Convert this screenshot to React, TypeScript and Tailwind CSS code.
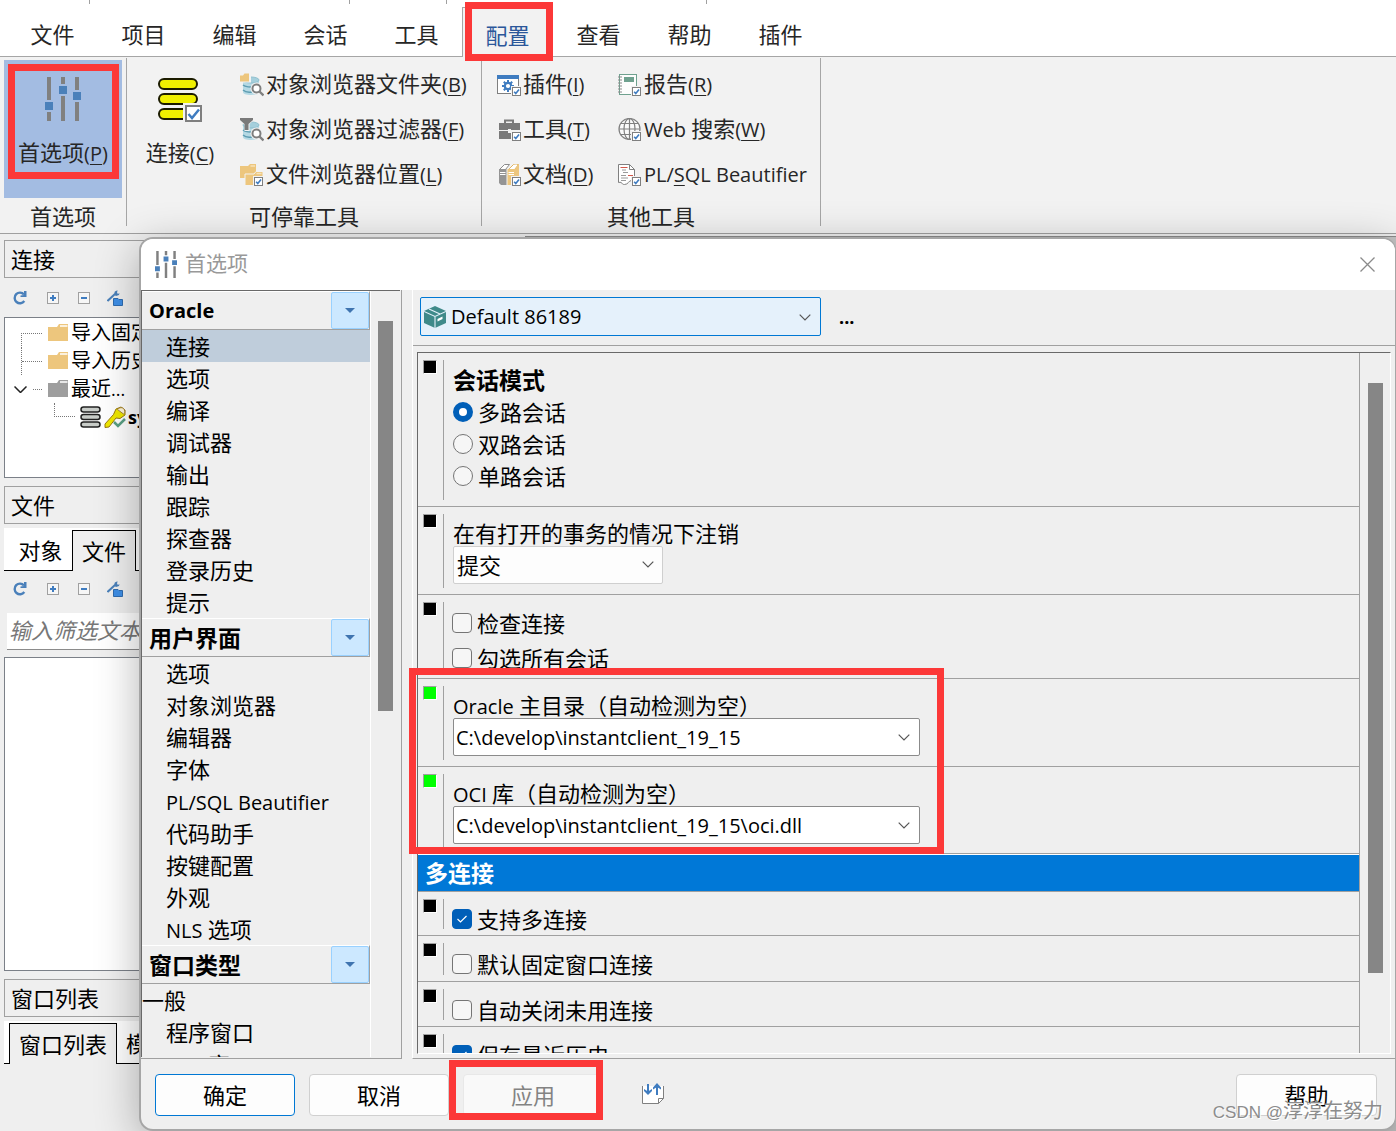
import React from "react";

/* ---------- small drawing helpers ---------- */

function TickBadge({ x, y, s = 9 }: { x: number; y: number; s?: number }) {
  return (
    <g transform={`translate(${x} ${y})`}>
      <rect x="-1" y="-1" width={s + 2} height={s + 2} fill="#f2f2f2" />
      <rect x="0.5" y="0.5" width={s - 1} height={s - 1} fill="#fff" stroke="#7f7f7f" />
      <path
        d={`M${s * 0.24} ${s * 0.52}L${s * 0.42} ${s * 0.72}L${s * 0.78} ${s * 0.28}`}
        fill="none"
        stroke="#3f7cc0"
        strokeWidth={s * 0.18}
      />
    </g>
  );
}

/* Latin runs are set a little smaller than the Chinese text around them. */
function Mixed({ text }: { text: string }) {
  return (
    <>
      {text.split(/([\x20-\x7e]+)/).map((run, i) =>
        i % 2 === 1 ? (
          <span key={i} className="text-[20px]">
            {run}
          </span>
        ) : (
          run
        ),
      )}
    </>
  );
}

function SlidersIcon({ className }: { className: string }) {
  return (
    <svg className={className} viewBox="0 0 36 44" aria-hidden="true">
      <g fill="#808080">
        <path d="M2 0h4v23H2zM2 35h4v9H2zM16 0h4v7h-4zM16 19h4v25h-4zM30 0h4v13h-4zM30 25h4v19h-4z" />
      </g>
      <path fill="#4a80ba" d="M0 25h8v8H0zM14 9h8v8h-8zM28 15h8v8h-8z" />
    </svg>
  );
}

function ConnectionIcon() {
  return (
    <svg className="h-[46px] w-[46px]" viewBox="0 0 46 46" aria-hidden="true">
      <g fill="#f0f000" stroke="#1c1c00" strokeWidth="2">
        <rect x="2" y="2" width="38" height="10" rx="5" />
        <rect x="2" y="17" width="38" height="10" rx="5" />
        <rect x="2" y="32" width="38" height="10" rx="5" />
      </g>
      <rect x="26" y="26" width="20" height="20" fill="#f2f2f2" />
      <rect x="29" y="29" width="15" height="15" fill="#fff" stroke="#7f7f7f" strokeWidth="2" />
      <path d="M31.500 37l3.500 4 7-8.500" fill="none" stroke="#3f7cc0" strokeWidth="2.500" />
    </svg>
  );
}

function Database({ children }: { children: React.ReactNode }) {
  return (
    <svg className="h-6 w-6" viewBox="0 0 24 24" aria-hidden="true">
      <path d="M3 7v12c0 2 3 3 8 3s8-1 8-3V7z" fill="#b5d9e4" />
      <path d="M3 12c2 2 8 2.500 11 1.500M3 17c2 2 6 2.500 9 2" fill="none" stroke="#5e9db2" strokeWidth="1.400" />
      <ellipse cx="11" cy="7" rx="8" ry="3" fill="#a5cfdc" stroke="#8fc0cf" />
      <circle cx="16.500" cy="15.500" r="6" fill="#f2f2f2" />
      <circle cx="16.500" cy="15.500" r="4" fill="#fff" stroke="#7f7f7f" strokeWidth="2" />
      <path d="M19.500 18.500l4 4" stroke="#7f7f7f" strokeWidth="2.400" />
      {children}
    </svg>
  );
}

const FolderDbIcon = () => (
  <Database>
    <path d="M-1 0h12v9.500H-1z" fill="#f2f2f2" />
    <path d="M0 2.500h3L4.500 0.500H9v8H0z" fill="#edc67d" />
  </Database>
);

const FilterDbIcon = () => (
  <Database>
    <path d="M-1 0h15v2L9.500 6v7h-5V7L-1 2z" fill="#f2f2f2" />
    <path d="M0 0h13v2L8.500 6v6h-4V6L0 2z" fill="#7a7a7a" />
  </Database>
);

const FoldersIcon = () => (
  <svg className="h-6 w-6" viewBox="0 0 24 24" aria-hidden="true">
    <path d="M0 3h8l2-2h6v14H0z" fill="#edc67d" />
    <path d="M10.500 3h4.500" stroke="#f7e3bb" strokeWidth="1.500" />
    <path d="M5 11h9l2-2.500h7v14H5z" fill="#edc67d" stroke="#f2f2f2" />
    <path d="M16.500 10.500h5" stroke="#f7e3bb" strokeWidth="1.500" />
    <TickBadge x={14} y={14} />
  </svg>
);

const PluginIcon = () => (
  <svg className="h-6 w-6" viewBox="0 0 24 24" aria-hidden="true">
    <rect x="0.500" y="2.500" width="21" height="18" fill="#fff" stroke="#7f7f7f" />
    <path d="M0 2h22v4H0z" fill="#3f7cc0" />
    <circle cx="11" cy="13" r="3.200" fill="none" stroke="#3f7cc0" strokeWidth="2.200" />
    <path
      d="M11 7v2.500M11 16.500V19M5 13h2.500M14.500 13H17M6.800 8.800l1.700 1.700M13.500 15.500l1.700 1.700M15.200 8.800l-1.700 1.700M8.500 15.500l-1.700 1.700"
      stroke="#3f7cc0"
      strokeWidth="2"
    />
    <TickBadge x={15} y={14} />
  </svg>
);

const ToolboxIcon = () => (
  <svg className="h-6 w-6" viewBox="0 0 24 24" aria-hidden="true">
    <path d="M8 5V2.500h8V5" fill="none" stroke="#7a7a7a" strokeWidth="2" />
    <path d="M2 5h21v7h-9v-1h-3v1H2zM2 13h9v2h3v-2h9v8H2z" fill="#7a7a7a" />
    <TickBadge x={15} y={14} />
  </svg>
);

const BooksIcon = () => (
  <svg className="h-6 w-6" viewBox="0 0 24 24" aria-hidden="true">
    <path d="M2.500 6.500l5-5h5l-4 5z" fill="#fff" stroke="#8c8c8c" />
    <path d="M2 6h7.500v16H4l-2-2z" fill="#949494" />
    <path d="M11.500 6.500l5-5h5l-4 5z" fill="#fff" stroke="#e0b25c" />
    <path d="M10.500 6H18l4-5v15l-4 6h-7.500z" fill="#edc67d" />
    <path d="M12.500 6l5-4.500h3L17 6z" fill="#fff" />
    <path d="M3 9.500h5.500M3 11.500h5.500M11.500 9.500h5.500M11.500 11.500h5.500" stroke="#fff" />
    <TickBadge x={15} y={14} />
  </svg>
);

const ReportIcon = () => (
  <svg className="h-6 w-6" viewBox="0 0 24 24" aria-hidden="true">
    <rect x="1.500" y="1.500" width="17" height="20" fill="#fdfdfd" stroke="#6fa18f" />
    <rect x="6" y="4" width="10" height="5" fill="#6fa18f" />
    <path d="M0 4h4M0 7h4M0 10h4M0 13h4M0 16h4M0 19h4" stroke="#8a8a8a" strokeWidth="1.200" />
    <TickBadge x={14} y={14} />
  </svg>
);

const GlobeIcon = () => (
  <svg className="h-6 w-6" viewBox="0 0 24 24" aria-hidden="true">
    <g fill="none" stroke="#808080" strokeWidth="1.200">
      <circle cx="11.500" cy="11" r="10.500" fill="#fafafa" />
      <ellipse cx="11.500" cy="11" rx="5.500" ry="10.500" />
      <path d="M11.500 0.500v21M1 11h21M2.500 5.500h18M2.500 16.500h18" />
    </g>
    <TickBadge x={14} y={14} />
  </svg>
);

const BeautifierIcon = () => (
  <svg className="h-6 w-6" viewBox="0 0 24 24" aria-hidden="true">
    <path d="M0.500 1.500h11l5 5v7l-3 4c-3 0-3 4-7 4s-1-3-6-2z" fill="#fff" stroke="#808080" />
    <path d="M11.500 1.500v5h5" fill="none" stroke="#808080" />
    <path d="M2.500 4.500h7M10 12.500h5" stroke="#d2574a" strokeWidth="1.200" />
    <path d="M4 7h4M5 9.500h5M3 12.500h5M3 15h7M3 17.500h5" stroke="#9a9a9a" />
    <TickBadge x={14} y={14} />
  </svg>
);

function Chevron({ className }: { className: string }) {
  return (
    <svg className={className} viewBox="0 0 12 7" aria-hidden="true">
      <path d="M0.700 0.700L6 6l5.300-5.300" fill="none" stroke="#555" strokeWidth="1.200" />
    </svg>
  );
}

function Callout({ className }: { className: string }) {
  return <div className={`pointer-events-none absolute z-10 border-[7px] border-[#fc3838] ${className}`} />;
}

/* ---------- ribbon ---------- */

const menus = ["文件", "项目", "编辑", "会话", "工具", "配置", "查看", "帮助", "插件"];

function Mnemonic({ text }: { text: string }) {
  const [before, key, after] = text.split("_");
  return (
    <span className="whitespace-nowrap">
      <Mixed text={before} />
      <span className="text-[20px] underline decoration-1 underline-offset-3">{key}</span>
      <Mixed text={after} />
    </span>
  );
}

function RibbonItem({ icon, text }: { icon: React.ReactNode; text: string }) {
  return (
    <button className="flex h-[46px] items-center gap-[2px] leading-[30px]">
      {icon}
      <span className="pb-[2px]">
        <Mnemonic text={text} />
      </span>
    </button>
  );
}

function MenuBar() {
  return (
    <header className="bg-white">
      <div className="flex h-1" aria-hidden="true">
        <i className="w-[90px] border-r border-[#a0a0a0]" />
        <i className="w-[260px] border-r border-[#a0a0a0]" />
        <i className="w-[97px] border-r border-[#a0a0a0]" />
        <i className="w-[260px] border-r border-[#a0a0a0]" />
      </div>
      <nav className="flex h-[53px] items-end border-b border-[#a6a6a6] pl-[7px]">
        {menus.map((m) => (
          <button
            key={m}
            className={
              m === "配置"
                ? "relative -mb-px h-[50px] w-[91px] border border-b-0 border-[#a6a6a6] bg-[#f2f2f2] pt-[5px] text-[#2b579a]"
                : "h-[49px] w-[91px] pt-[5px]"
            }
          >
            {m}
            {m === "配置" && <Callout className="-top-[6px] left-[2px] h-[59px] w-[88px]" />}
          </button>
        ))}
      </nav>
    </header>
  );
}

function RibbonGroup({ label, className, children }: { label: string; className: string; children: React.ReactNode }) {
  return (
    <section className={`flex flex-col border-r border-[#a6a6a6] ${className}`}>
      <div className="flex h-[140px] shrink-0">{children}</div>
      <h2 className="pt-[7px] text-center leading-[22px]">{label}</h2>
    </section>
  );
}

function Ribbon() {
  return (
    <div className="flex h-[177px] border-b border-[#a0a0a0] bg-[#f2f2f2] pt-px pb-[7px]">
      <RibbonGroup label="首选项" className="w-[127px]">
        <button className="relative mt-[2px] ml-1 flex h-[138px] w-[118px] flex-col items-center bg-[#a3bce2] pt-[17px]">
          <SlidersIcon className="h-[44px] w-[36px]" />
          <span className="mt-[15px] leading-[32px]">
            <Mnemonic text="首选项(_P_)" />
          </span>
          <Callout className="top-1 left-1 h-[115px] w-[111px]" />
        </button>
      </RibbonGroup>
      <RibbonGroup label="可停靠工具" className="w-[355px]">
        <button className="ml-[15px] flex w-[76px] flex-col items-center pt-[19px]">
          <ConnectionIcon />
          <span className="mt-[13px] leading-[32px]">
            <Mnemonic text="连接(_C_)" />
          </span>
        </button>
        <div className="ml-[22px] flex shrink-0 flex-col pt-1">
          <RibbonItem icon={<FolderDbIcon />} text="对象浏览器文件夹(_B_)" />
          <RibbonItem icon={<FilterDbIcon />} text="对象浏览器过滤器(_F_)" />
          <RibbonItem icon={<FoldersIcon />} text="文件浏览器位置(_L_)" />
        </div>
      </RibbonGroup>
      <RibbonGroup label="其他工具" className="w-[339px]">
        <div className="ml-[15px] flex w-[121px] flex-col pt-1">
          <RibbonItem icon={<PluginIcon />} text="插件(_I_)" />
          <RibbonItem icon={<ToolboxIcon />} text="工具(_T_)" />
          <RibbonItem icon={<BooksIcon />} text="文档(_D_)" />
        </div>
        <div className="flex flex-col pt-1">
          <RibbonItem icon={<ReportIcon />} text="报告(_R_)" />
          <RibbonItem icon={<GlobeIcon />} text="Web 搜索(_W_)" />
          <RibbonItem icon={<BeautifierIcon />} text="PL/_S_QL Beautifier" />
        </div>
      </RibbonGroup>
    </div>
  );
}

/* ---------- docked side panels ---------- */

function PanelTitle({ children }: { children: React.ReactNode }) {
  return <h3 className="h-[38px] border border-[#a0a0a0] pl-[6px] leading-[36px] text-black">{children}</h3>;
}

function PanelToolbar({ className }: { className: string }) {
  return (
    <div className={`flex items-center pl-[9px] ${className}`}>
      <button aria-label="刷新">
        <svg className="h-[14px] w-[14px]" viewBox="0 0 14 14">
          <path d="M11.300 10A5.300 5.300 0 1 1 11 3.500" fill="none" stroke="#4a80ba" strokeWidth="2.400" />
          <path d="M13.500 0v6H7.500V4.500L11 4V0z" fill="#4a80ba" />
        </svg>
      </button>
      <button aria-label="展开" className="ml-5">
        <svg className="h-3 w-3" viewBox="0 0 12 12">
          <rect x="0.500" y="0.500" width="11" height="11" fill="#f6f6f6" stroke="#a0a0a0" />
          <path d="M3 6h6M6 3v6" stroke="#3f7cc0" strokeWidth="2" />
        </svg>
      </button>
      <button aria-label="折叠" className="ml-[19px]">
        <svg className="h-3 w-3" viewBox="0 0 12 12">
          <rect x="0.500" y="0.500" width="11" height="11" fill="#f6f6f6" stroke="#a0a0a0" />
          <path d="M3 6h6" stroke="#3f7cc0" strokeWidth="2" />
        </svg>
      </button>
      <button aria-label="设置文件夹" className="ml-[17px]">
        <svg className="h-4 w-4" viewBox="0 0 16 16">
          <path d="M0.500 11L8 4" stroke="#4a80ba" strokeWidth="2" />
          <path d="M10.500 0.300L7.800 1.500 7 4.500l2 1.500 3-1 .5-2-1 .700-1.500-.5z" fill="#4a80ba" />
          <path d="M6.500 8.500h4.500l1 1h3.500v6h-9z" fill="#3f8fe6" stroke="#2f6cb0" />
        </svg>
      </button>
    </div>
  );
}

function Folder({ color }: { color: string }) {
  return (
    <svg className="h-[20px] w-[21px] shrink-0" viewBox="0 0 21 20" aria-hidden="true">
      <path d="M0 4h9l2-3h9v17H0z" fill={color} />
      <path d="M12 3h7.500" stroke="#fff" strokeWidth="1.500" />
    </svg>
  );
}

function SidePanels() {
  return (
    <aside className="flex w-[525px] flex-col pt-[6px] pl-1">
      <PanelTitle>连接</PanelTitle>
      <PanelToolbar className="h-[39px]" />
      <ul className="h-[161px] border border-[#7b8088] bg-white pt-px text-[20px] text-black">
        <li className="flex h-7 items-center">
          <i className="ml-4 h-[15px] w-[21px] translate-y-[7px] border-t border-l border-dotted border-[#777]" />
          <span className="ml-[6px] flex items-center gap-[2px]"><Folder color="#edc67d" />导入固定</span>
        </li>
        <li className="flex h-7 items-center">
          <i className="ml-4 flex h-7 w-[21px] items-center border-l border-dotted border-[#777]">
            <i className="w-full border-t border-dotted border-[#777]" />
          </i>
          <span className="ml-[6px] flex items-center gap-[2px]"><Folder color="#edc67d" />导入历史</span>
        </li>
        <li className="flex h-7 items-center">
          <svg className="ml-[9px] h-[7px] w-[13px]" viewBox="0 0 13 7" aria-hidden="true">
            <path d="M0.500 0.500l6 6 6-6" fill="none" stroke="#222" strokeWidth="1.500" />
          </svg>
          <i className="ml-[6px] w-[9px] border-t border-dotted border-[#777]" />
          <span className="ml-[6px] flex items-center gap-[2px]">
            <Folder color="#9e9e9e" />
            <span>
              最近<span className="text-[18px]">...</span>
            </span>
          </span>
        </li>
        <li className="flex h-7 items-center gap-[2px]">
          <i className="mb-[14px] ml-[49px] h-[14px] w-[21px] border-b border-l border-dotted border-[#777]" />
          <svg className="ml-[3px] h-[22px] w-[21px]" viewBox="0 0 21 22" aria-hidden="true">
            <g fill="#c8ccc8" stroke="#222" strokeWidth="1.500">
              <rect x="1" y="1" width="19" height="5" rx="2.500" />
              <rect x="1" y="8.500" width="19" height="5" rx="2.500" />
              <rect x="1" y="16" width="19" height="5" rx="2.500" />
            </g>
          </svg>
          <svg className="ml-px h-[22px] w-[22px]" viewBox="0 0 22 22" aria-hidden="true">
            <path d="M9.500 8.500L12 3l5-2 4 3v5l-5 3.500-4-.500L5 21l-4 .500v-3.500z" fill="#f0e800" stroke="#9a7a10" />
            <path d="M13.500 3.500c2-2.500 6-2.500 7 .500 .500 2 0 3.500-1 4z" fill="#fff6d8" stroke="#a88438" />
            <path d="M10 16l4 4 7-7" fill="none" stroke="#5aa084" strokeWidth="2.500" />
          </svg>
          <b className="text-[18px]">sys</b>
        </li>
      </ul>

      <div className="mt-2">
        <PanelTitle>文件</PanelTitle>
      </div>
      <div className="mt-1 flex h-[43px] bg-white text-black">
        <button className="w-[68px] border-b border-black pt-[3px] pl-[5px]">对象</button>
        <button className="mt-[2px] w-[64px] border border-b-0 border-black bg-[#efefef]">文件</button>
        <span className="flex-1 border-b border-black" />
      </div>
      <PanelToolbar className="h-9" />
      <input
        aria-label="筛选"
        placeholder="输入筛选文本"
        className="mt-[6px] ml-[3px] h-[37px] border-b border-[#8b8b8b] bg-white pb-[2px] pl-[2px] italic outline-none placeholder:text-[#777]"
      />
      <div className="mt-[7px] h-[314px] border border-[#7b8088] bg-white" />

      <div className="mt-2">
        <PanelTitle>窗口列表</PanelTitle>
      </div>
      <div className="mt-1 flex h-[43px] bg-white text-black">
        <span className="w-[5px] border-b border-black" />
        <button className="mt-[2px] w-[108px] border border-b-0 border-black bg-[#efefef]">窗口列表</button>
        <button className="flex-1 border-b border-black pt-[2px] pl-[9px] text-left">模板</button>
      </div>
    </aside>
  );
}

/* ---------- preferences dialog ---------- */

const sections = [
  { title: "Oracle", items: ["连接", "选项", "编译", "调试器", "输出", "跟踪", "探查器", "登录历史", "提示"] },
  {
    title: "用户界面",
    items: ["选项", "对象浏览器", "编辑器", "字体", "PL/SQL Beautifier", "代码助手", "按键配置", "外观", "NLS 选项"],
  },
  { title: "窗口类型", items: ["一般", "程序窗口", "SQL 窗口"] },
];

function SectionNav() {
  return (
    <div className="mb-px flex w-[261px] shrink-0 border-r border-b border-[#a0a0a0]">
      <div className="mb-px flex w-[259px] border-t border-l border-[#696969]">
        <nav className="w-[228px] overflow-hidden">
          {sections.map((s) => (
            <section key={s.title}>
              <h3
                className={`flex h-[39px] items-center justify-between border-t border-r border-b border-t-white border-r-[#a0a0a0] border-b-[#a0a0a0] pl-[7px] font-bold ${
                  s.title === "Oracle" ? "text-[20px]" : "text-[23px]"
                }`}
              >
                <span className="pt-px">{s.title}</span>
                <button
                  aria-label={`${s.title} 菜单`}
                  className="flex h-[37px] w-[38px] items-center justify-center rounded-[2px] border border-[#99d1ff] bg-[#cce8ff]"
                >
                  <svg className="h-[5px] w-[10px]" viewBox="0 0 10 5">
                    <path d="M0 0h10L5 5z" fill="#3f74b0" />
                  </svg>
                </button>
              </h3>
              {s.items.map((item) => (
                <button
                  key={item}
                  className={
                    item === "一般"
                      ? "block h-8 w-full text-left leading-[32px]"
                      : s.title === "Oracle" && item === "连接"
                        ? "block h-8 w-full bg-[#bfcddb] pl-6 text-left leading-[32px]"
                        : "block h-8 w-full pl-6 text-left leading-[32px]"
                  }
                >
                  <Mixed text={item} />
                </button>
              ))}
            </section>
          ))}
        </nav>
        <div className="flex-1 border-l border-white pt-[30px] pl-[7px]">
          <div className="h-[53%] w-[15px] bg-[#868686]" />
        </div>
      </div>
    </div>
  );
}

function Option({ className, on = false, children }: { className: string; on?: boolean; children: React.ReactNode }) {
  return (
    <div className={`flex shrink-0 border-b border-[#a0a0a0] pl-[5px] ${className}`}>
      <span
        className={`mt-[7px] h-[14px] w-[14px] shrink-0 border border-t-[#a0a0a0] border-r-white border-b-white border-l-[#a0a0a0] ${
          on ? "bg-[#00ff00]" : "bg-black"
        }`}
      />
      <div className="mt-[7px] mb-[6px] ml-[6px] flex flex-1 flex-col items-start border-l border-[#a0a0a0] pl-[9px]">
        {children}
      </div>
    </div>
  );
}

function Radio({ label, checked }: { label: string; checked?: boolean }) {
  return (
    <label className="flex h-8 items-center gap-[5px]">
      <input
        type="radio"
        name="session-mode"
        defaultChecked={checked}
        className="h-5 w-5 appearance-none rounded-full border border-[#757575] bg-[#f6f6f6] checked:border-[6px] checked:border-[#005fb8] checked:bg-white"
      />
      {label}
    </label>
  );
}

function Check({ label, checked }: { label: string; checked?: boolean }) {
  return (
    <label className="-ml-px flex h-[35px] items-center gap-[5px]">
      <span className="relative h-5 w-5">
        <input
          type="checkbox"
          defaultChecked={checked}
          className="peer block h-5 w-5 appearance-none rounded-[4px] border border-[#757575] bg-[#f6f6f6] checked:border-[#005fb8] checked:bg-[#005fb8]"
        />
        <svg className="absolute top-[6px] left-[5px] hidden h-2 w-[10px] peer-checked:block" viewBox="0 0 10 8" aria-hidden="true">
          <path d="M0.500 4l3 3 6-6" fill="none" stroke="#fff" strokeWidth="1.200" />
        </svg>
      </span>
      <span className="pt-px">{label}</span>
    </label>
  );
}

function PathField({ id, label, value }: { id: string; label: string; value: string }) {
  return (
    <>
      <label htmlFor={id} className="mt-[5px] h-[27px] leading-[29px]">
        <Mixed text={label} />
      </label>
      <div className="flex h-[38px] w-[467px] items-center rounded-[2px] border border-[#8b8b8b] bg-white">
        <input id={id} defaultValue={value} className="h-full min-w-0 flex-1 bg-transparent pl-[2px] text-[20px] outline-none" />
        <button aria-label="展开列表" className="px-[9px]">
          <Chevron className="h-[7px] w-3" />
        </button>
      </div>
    </>
  );
}

function Settings() {
  return (
    <div className="mb-px flex min-w-0 flex-1 flex-col border-b border-l border-b-[#a0a0a0] border-l-white">
      <div className="flex h-[56px] shrink-0 items-start border-b border-[#a0a0a0] pt-[7px] pl-[7px]">
        <div className="relative">
          <svg className="pointer-events-none absolute top-[9px] left-1 h-[22px] w-[22px]" viewBox="0 0 22 22" aria-hidden="true">
            <path d="M0 5L11 0l11 5v12l-11 5L0 17z" fill="#3f8a8a" />
            <path d="M0 5.500l11 5 11-5M11 10.500V22M5 3l11 5" fill="none" stroke="#e5f1fb" strokeWidth="1.100" />
            <path d="M13.500 13l5-2.500v2.500l-5 2.500z" fill="#fff" />
          </svg>
          <select
            aria-label="首选项集"
            className="h-[39px] w-[401px] appearance-none rounded-[2px] border border-[#0078d4] bg-[#e5f1fb] pt-px pl-[30px] text-[20px] outline-none"
          >
            <option>Default 86189</option>
          </select>
          <Chevron className="pointer-events-none absolute top-[17px] right-[10px] h-[7px] w-3" />
        </div>
        <button aria-label="更多" className="mt-[7px] ml-[18px] text-[18px] leading-[27px] font-bold">
          ...
        </button>
      </div>
      <div className="mt-[6px] mr-1 mb-1 ml-1 flex min-h-0 flex-1 border border-t-[#696969] border-r-white border-b-white border-l-[#696969]">
        <div className="flex min-w-0 flex-1 flex-col overflow-hidden border-r border-[#a0a0a0]">
          <Option className="h-[154px]">
            <fieldset>
              <legend className="pt-1 text-[23px] leading-[32px] font-bold">会话模式</legend>
              <Radio label="多路会话" checked />
              <Radio label="双路会话" />
              <Radio label="单路会话" />
            </fieldset>
          </Option>
          <Option className="h-[88px]">
            <label htmlFor="logoff" className="mt-[5px] h-[27px] leading-[29px]">
              在有打开的事务的情况下注销
            </label>
            <div className="relative">
              <select
                id="logoff"
                className="h-[38px] w-[210px] appearance-none rounded-[2px] border border-[#cfcfcf] bg-[#fdfdfd] pl-[3px] outline-none"
              >
                <option>提交</option>
              </select>
              <Chevron className="pointer-events-none absolute top-[15px] right-[9px] h-[7px] w-3" />
            </div>
          </Option>
          <Option className="h-[84px]">
            <div className="mt-[3px]">
              <Check label="检查连接" />
              <Check label="勾选所有会话" />
            </div>
          </Option>
          <Option className="h-[88px]" on>
            <PathField id="oracle-home" label="Oracle 主目录（自动检测为空）" value="C:\develop\instantclient_19_15" />
          </Option>
          <Option className="h-[87px]" on>
            <PathField id="oci-library" label="OCI 库（自动检测为空）" value="C:\develop\instantclient_19_15\oci.dll" />
          </Option>
          <h3 className="h-[38px] shrink-0 border-t border-b border-t-white border-b-[#a0a0a0] bg-[#0078d7] pl-[7px] text-[23px] leading-[36px] font-bold text-white">
            多连接
          </h3>
          <Option className="h-[44px]">
            <div className="mt-[2px]"><Check label="支持多连接" checked /></div>
          </Option>
          <Option className="h-[46px]">
            <div className="mt-[3px]"><Check label="默认固定窗口连接" /></div>
          </Option>
          <Option className="h-[45px]">
            <div className="mt-[3px]"><Check label="自动关闭未用连接" /></div>
          </Option>
          <Option className="h-[45px]">
            <div className="mt-[3px]"><Check label="保存最近历史" checked /></div>
          </Option>
        </div>
        <div className="w-[30px] pt-[30px] pl-2">
          <div className="h-[88%] w-[15px] bg-[#868686]" />
        </div>
      </div>
    </div>
  );
}

function PreferencesDialog() {
  return (
    <div
      role="dialog"
      aria-label="首选项"
      className="absolute top-[237px] right-0 bottom-0 left-[139px] flex flex-col rounded-[14px] border-2 border-r border-[#a6a6a6] bg-[#efefef] text-black shadow-[0_10px_44px_rgba(0,0,0,0.3)]"
    >
      <div className="flex h-[51px] shrink-0 items-center rounded-t-[12px] bg-white pl-[14px]">
        <SlidersIcon className="h-[27px] w-[22px]" />
        <h1 className="ml-2 flex-1 pb-[2px] text-[21px] text-[#999]">首选项</h1>
        <button aria-label="关闭" className="mr-5">
          <svg className="h-[15px] w-[15px]" viewBox="0 0 15 15">
            <path d="M0.500 0.500l14 14M14.500 0.500l-14 14" stroke="#8a8a8a" strokeWidth="1.300" />
          </svg>
        </button>
      </div>
      <div className="flex min-h-0 flex-1 gap-[10px]">
        <SectionNav />
        <Settings />
      </div>
      <Callout className="top-[429px] left-[268px] h-[186px] w-[535px]" />
      <footer className="flex h-[69px] shrink-0 items-start pt-[14px] pr-[18px] pl-[14px]">
        <button className="h-[42px] w-[140px] rounded-[4px] border border-[#0078d4] bg-[#fdfdfd]">确定</button>
        <button className="ml-[14px] h-[42px] w-[140px] rounded-[4px] border border-[#d0d0d0] bg-[#fdfdfd]">取消</button>
        <div className="relative ml-[14px]">
          <button disabled className="h-[42px] w-[140px] rounded-[4px] border border-[#e8e8e8] bg-[#f9f9f9] text-[#838383]">
            应用
          </button>
          <Callout className="-top-[14px] -left-[14px] h-[60px] w-[154px]" />
        </div>
        <button aria-label="导入导出" className="mt-[9px] ml-[39px]">
          <svg className="h-[22px] w-[22px]" viewBox="0 0 22 22">
            <path d="M0.500 3v17.500h16l5-5V3" fill="#fff" />
            <path d="M0.500 3v17.500h16l5-5V3M16.500 20.500v-5h5" fill="none" stroke="#808080" />
            <path d="M6 1v8M15 12V4" stroke="#3f7cc0" strokeWidth="2" />
            <path d="M2 6l4 2.500L10 6v2l-4 4-4-4zM11 6.500l4-2.500 4 2.500v-2L15 0l-4 4.500z" fill="#3f7cc0" />
          </svg>
        </button>
        <button className="ml-auto h-[42px] w-[141px] rounded-[4px] border border-[#d0d0d0] bg-[#fdfdfd]">帮助</button>
      </footer>
      <p className="absolute right-3 bottom-[3px] font-['Liberation_Sans','Noto_Sans_CJK_SC',sans-serif] text-[20px] leading-[26px] text-[#8c8c8c] [text-shadow:1px_1px_0_#fff]">
        <span className="text-[17px]">CSDN @</span>淳淳在努力
      </p>
    </div>
  );
}

export default function App() {
  return (
    <div className="relative flex h-screen flex-col overflow-hidden bg-[#efefef] font-['Open_Sans','Noto_Sans_CJK_SC',sans-serif] text-[22px] text-[#262626]">
      <MenuBar />
      <Ribbon />
      <main className="flex min-h-0 flex-1">
        <SidePanels />
        <div className="mt-[2px] flex-1 border-t border-l border-[#8b8b8b] bg-[#c4c4c4]" />
      </main>
      <PreferencesDialog />
    </div>
  );
}
